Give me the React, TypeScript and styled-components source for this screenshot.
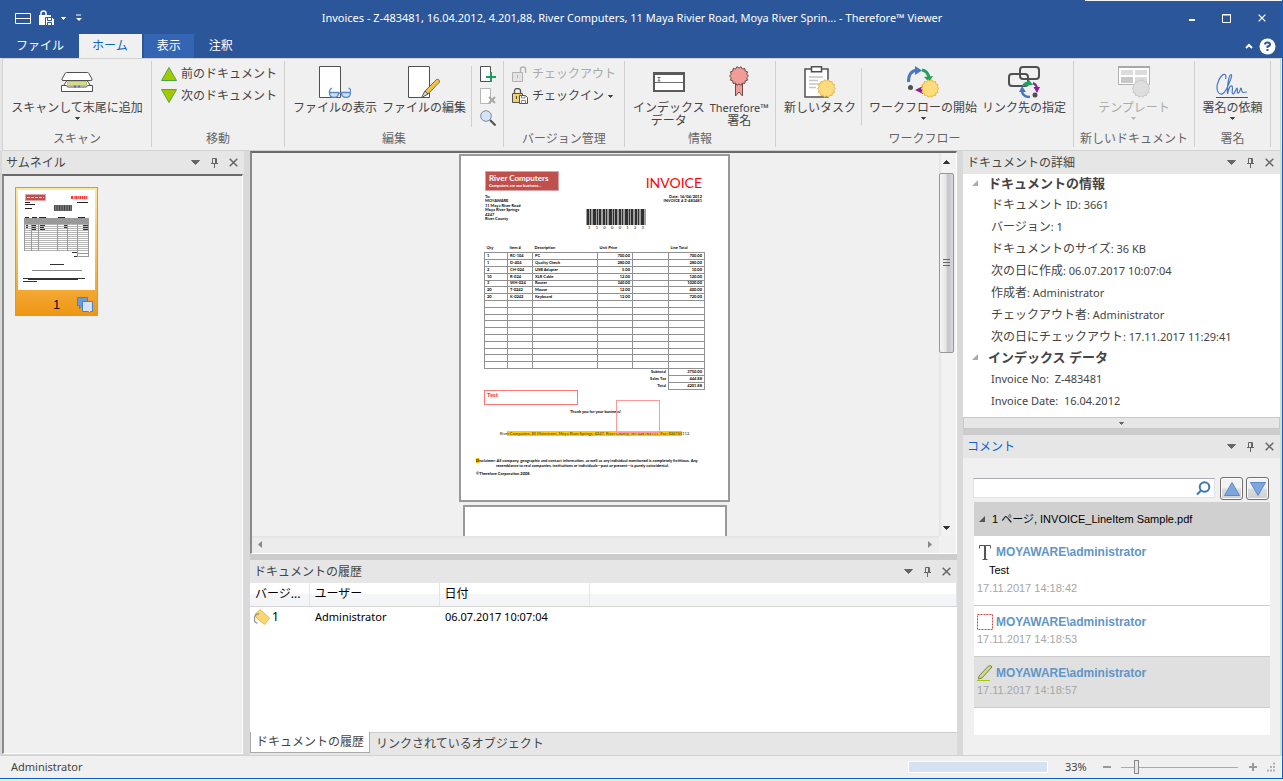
import React from "react";
import styled, { createGlobalStyle, css } from "styled-components";

const uiFont = '"Noto Sans", "Noto Sans CJK JP", sans-serif';
const plainFont = '"Liberation Sans", "Noto Sans CJK JP", sans-serif';
const blue = "#2b579a";

const GlobalStyle = createGlobalStyle`
  * { box-sizing: border-box; }
  body { margin: 0; overflow: hidden; background: #e9eef4; }
  button, input { font: inherit; color: inherit; margin: 0; }
  button { padding: 0; border: 0; background: none; }
  svg { display: block; flex: none; }
`;

/* ---------- window ---------- */

const Window = styled.div`
  display: flex;
  flex-direction: column;
  height: calc(100vh - 2px);
  border-right: 1px solid #0a60c8;
  border-bottom: 1px solid #0a60c8;
  background: #e6e6e6;
  font-family: ${uiFont};
  font-size: 12px;
  line-height: 16px;
  color: #444;
  white-space: nowrap;
`;

const TopEdge = styled.div`
  flex: none;
  height: 2px;
  border-bottom: 1px solid #0a60c8;
  background: linear-gradient(to left, #f4f4f4 197px, ${blue} 197px);
`;

const TitleBar = styled.header`
  flex: none;
  display: grid;
  grid-template-columns: 120px 1fr 138px;
  align-items: center;
  height: 32px;
  background: ${blue};
  color: #fff;
`;

const QuickTools = styled.div`
  display: flex;
  align-items: center;
  gap: 5px;
  padding-left: 15px;
`;

const Title = styled.h1`
  margin: 0;
  font-size: 11px;
  font-weight: 400;
  text-align: center;
`;

const WindowButtons = styled.div`
  display: flex;
  justify-content: flex-end;
  padding-right: 3px;
`;

const WindowButton = styled.button`
  display: grid;
  place-items: center;
  width: 35px;
  height: 24px;
`;

const TabBar = styled.nav`
  flex: none;
  display: flex;
  gap: 2px;
  height: 24px;
  padding: 0 6px 0 3px;
  background: ${blue};
  color: #fff;
`;

const RibbonTab = styled.button<{ $state?: "active" | "hover" }>`
  padding: 0 13px;
  line-height: 22px;
  ${(p) => p.$state === "active" && css`padding-right: 14px; background: #f0f0f0; color: #0a64c8;`}
  ${(p) => p.$state === "hover" && css`background: #3365b2;`}
`;

const TabTools = styled.div`
  display: flex;
  align-items: center;
  gap: 6px;
  margin-left: auto;
`;

/* ---------- ribbon ---------- */

const Ribbon = styled.div`
  flex: none;
  display: flex;
  height: 93px;
  margin: 0 1px 0 2px;
  border: 1px solid #d2d2d2;
  background: #f0f0f0;
`;

const Group = styled.section<{ $width: number }>`
  display: flex;
  flex-direction: column;
  width: ${(p) => p.$width}px;
  margin: 2px 0 3px;
  border-right: 1px solid #d0d0d0;
`;

const GroupBody = styled.div<{ $pad?: number }>`
  flex: 1;
  display: flex;
  justify-content: ${(p) => (p.$pad ? "flex-start" : "center")};
  gap: 5px;
  padding: 5px 0 0 ${(p) => p.$pad ?? 0}px;
`;

const GroupLabel = styled.div`
  line-height: 16px;
  text-align: center;
  color: #666;
`;

const BigButton = styled.button<{ $off?: boolean }>`
  display: flex;
  flex-direction: column;
  align-items: center;
  align-self: flex-start;
  gap: 3px;
  line-height: 13px;
  color: ${(p) => (p.$off ? "#aaa" : "#444")};
`;

const ButtonText = styled.span`
  display: flex;
  flex-direction: column;
  align-items: center;
`;

const Latin = styled.span`
  font-size: 11px;
`;

const SmallColumn = styled.div<{ $ruled?: boolean }>`
  display: flex;
  flex-direction: column;
  gap: 6px;
  ${(p) => p.$ruled && css`padding-left: 8px; border-left: 1px solid #d0d0d0; margin-bottom: 4px;`}
`;

const Rule = styled.div`
  width: 1px;
  height: 57px;
  margin: 2px 2px 0 0;
  background: #d0d0d0;
`;

const SmallButton = styled.button<{ $off?: boolean }>`
  display: flex;
  align-items: center;
  gap: 4px;
  height: 16px;
  color: ${(p) => (p.$off ? "#aaa" : "#444")};
`;

/* ---------- docking layout ---------- */

const Workspace = styled.main`
  flex: 1;
  min-height: 0;
  display: grid;
  grid-template-columns: 242px 1fr 317px;
  column-gap: 6px;
  padding: 0 2px 0 2px;
  background: #d9d9d9;
`;

const Column = styled.div`
  display: flex;
  flex-direction: column;
  min-width: 0;
  min-height: 0;
`;

const PanelHeader = styled.header`
  flex: none;
  display: flex;
  align-items: center;
  height: 23px;
  padding: 0 1px 0 4px;
  background: #e6e6e6;
`;

const PanelTitle = styled.h2<{ $active?: boolean }>`
  flex: 1;
  margin: 0;
  font-size: 12px;
  font-weight: 400;
  color: ${(p) => (p.$active ? "#0a64d8" : "#444")};
`;

const PanelButton = styled.button`
  display: grid;
  place-items: center;
  width: 19px;
  height: 19px;
`;

const Splitter = styled.div`
  flex: none;
  height: 6px;
  background: #ccc;
`;

/* ---------- thumbnails ---------- */

const ThumbList = styled.div`
  flex: 1;
  padding: 11px;
  margin: 0 1px 1px 0;
  border: solid;
  border-width: 2px 1px 1px 2px;
  border-color: #6a6a6a #fff #fff #8a8a8a;
  background: #f0f0f0;
`;

const Thumb = styled.button`
  display: grid;
  grid-template-columns: 1fr 18px;
  width: 83px;
  height: 129px;
  padding: 2px;
  border: 1px solid #e8961e;
  background: linear-gradient(#ffe9a0, #f3ab38 78%, #ee9614);
  color: #000;
  font-family: ${plainFont};
`;

const ThumbPage = styled.span`
  grid-column: 1 / 3;
  height: 100px;
  background: #fff;
`;

const ThumbNumber = styled.span`
  padding: 6px 0 0 18px;
  text-align: center;
`;

const ThumbNote = styled.span`
  padding-top: 6px;
`;

/* ---------- viewer ---------- */

const Viewer = styled.div`
  flex: 1;
  min-height: 0;
  display: grid;
  grid-template: minmax(0, 1fr) 17px / 1fr 17px;
  border: solid;
  border-width: 2px 1px 1px 2px;
  border-color: #6a6a6a #fff #fff #8a8a8a;
  background: #f0f0f0;
`;

const Canvas = styled.div`
  overflow: hidden;
  display: flex;
  flex-direction: column;
  align-items: center;
  gap: 3px;
  padding: 1px 2px 0 0;
`;

const Sheet = styled.article`
  position: relative;
  flex: none;
  width: 271px;
  height: 348px;
  padding: 15px 24px 0 15px;
  border: 2px solid #999;
  background: #fff;
  color: #000;
  font: 700 4px/4px Lato, sans-serif;
`;

const NextSheet = styled.div`
  flex: none;
  width: 264px;
  height: 348px;
  border: 2px solid #999;
  background: #fff;
`;

const SheetTop = styled.div`
  display: flex;
  justify-content: space-between;
  padding-left: 9px;
`;

const Brand = styled.div`
  width: 74px;
  height: 20px;
  padding: 2px 3px;
  border: 1px solid #d9a3a3;
  background: #c0504d;
  color: #fff;
  font-size: 4px;
  line-height: 5px;
`;

const BrandName = styled.div`
  font-size: 8px;
  line-height: 9px;
`;

const InvoiceWord = styled.div`
  padding: 5px 2px 0 0;
  font-size: 14px;
  font-weight: 400;
  line-height: 14px;
  color: #f00;
`;

const SheetMeta = styled.div`
  display: grid;
  grid-template-columns: 101px 60px 1fr;
  height: 54px;
  padding: 4px 2px 0 9px;
`;

const Address = styled.div`
  display: flex;
  flex-direction: column;
  justify-content: space-between;
  height: 26px;
`;

const Barcode = styled.div`
  padding-top: 14px;
  font-weight: 400;
`;

const BarcodeDigits = styled.div`
  display: flex;
  justify-content: space-between;
  padding: 1px 2px;
`;

const InvoiceRef = styled.div`
  text-align: right;
`;

const Items = styled.table`
  table-layout: fixed;
  width: 220px;
  margin-left: 8px;
  border-collapse: collapse;
  tr { height: 7px; }
  tbody tr:nth-child(5n) { height: 6px; }
  th, td { padding: 0 2px; text-align: left; font-weight: 700; }
  tbody td, td.sum { border: 1px solid #909090; }
  td.num, tfoot td { text-align: right; }
`;

const NoteBox = styled.div`
  width: 94px;
  height: 15px;
  margin-left: 8px;
  padding: 1px 2px;
  border: 1px solid #f77;
  color: #f33;
  font-size: 6px;
  line-height: 6px;
`;

const Thanks = styled.div`
  padding: 5px 0 0 94px;
`;

const Marked = styled.div`
  display: flex;
  justify-content: center;
  width: 175px;
  height: 5px;
  margin: 17px 0 0 31px;
  background: #ffc800;
  color: #7a5a1a;
  font-family: "Liberation Sans Narrow", Lato, sans-serif;
  line-height: 5px;
  white-space: nowrap;
`;

const Disclaimer = styled.p`
  margin: 23px 0 0;
  white-space: nowrap;
  mark { background: #ffc800; color: inherit; }
  span { display: block; padding: 1px 0 4px 20px; }
`;

const BoxNote = styled.div`
  position: absolute;
  left: 155px;
  top: 244px;
  width: 44px;
  height: 33px;
  border: 1px solid #f99;
`;

const ScrollTrack = styled.div<{ $flat?: boolean }>`
  display: flex;
  flex-direction: ${(p) => (p.$flat ? "row" : "column")};
  align-items: center;
  justify-content: space-between;
  padding: ${(p) => (p.$flat ? "0 7px 0 6px" : "7px 2px 6px 0")};
  background: ${(p) => (p.$flat ? "linear-gradient(#e2e2e2, #ececec 3px)" : "linear-gradient(to right, #e2e2e2, #f2f2f2 3px)")};
`;

const ScrollThumb = styled.div`
  display: grid;
  place-items: center;
  width: 15px;
  height: 180px;
  margin: 9px 0 auto;
  border: 1px solid #979797;
  border-radius: 2px;
  background: linear-gradient(to right, #f5f5f5, #e6e6e8 45%, #c4c4c8 60%, #d8d8dc);
`;

/* ---------- history ---------- */

const HistoryBody = styled.div`
  flex: none;
  height: 149px;
  background: #fff;
`;

const HistoryTable = styled.table`
  table-layout: fixed;
  width: 100%;
  border-collapse: collapse;
  color: #000;
  th {
    height: 23px;
    padding: 0 5px;
    border-right: 1px solid #e2e5e9;
    border-bottom: 1px solid #d5d5d5;
    background: linear-gradient(#fff 45%, #f4f6f8 50%, #f2f4f7);
    text-align: left;
    font-weight: 400;
  }
  td { height: 22px; padding: 0 6px; }
  td:first-child { padding: 0 4px; }
`;

const VersionCell = styled.span`
  display: flex;
  align-items: center;
  gap: 2px;
`;

const BottomTabs = styled.div`
  flex: none;
  display: flex;
  height: 23px;
  border-top: 1px solid #ccc;
  background: #e6e6e6;
`;

const BottomTab = styled.button<{ $active?: boolean }>`
  height: 21px;
  padding: 0 6px;
  margin: ${(p) => (p.$active ? "-1px 0 0" : "0")};
  ${(p) => p.$active && css`
    padding: 0 5px;
    border: 1px solid #aaa;
    border-top: 0;
    background: #fff;
  `}
`;

/* ---------- details ---------- */

const Details = styled.div`
  height: 243px;
  background: #fff;
`;

const DetailHeading = styled.h3`
  display: flex;
  align-items: center;
  gap: 10px;
  height: 20px;
  margin: 0;
  padding: 0 0 2px 9px;
  font-size: 13px;
`;

const DetailList = styled.ul`
  margin: 0;
  padding: 0 0 0 28px;
  list-style: none;
  line-height: 22px;
`;

const Expander = styled.button`
  flex: none;
  display: grid;
  place-items: center;
  height: 12px;
  border: 1px solid #c8c8c8;
  background: #e6e6e6;
`;

/* ---------- comments ---------- */

const Comments = styled.div`
  flex: 1;
  padding: 19px 10px 0 11px;
  background: #f0f0f0;
`;

const SearchRow = styled.div`
  display: flex;
  gap: 3px;
  height: 24px;
  margin: 0 1px 1px 0;
`;

const SearchBox = styled.label`
  flex: 1;
  display: flex;
  align-items: center;
  height: 20px;
  margin: 1px 2px 0 -1px;
  padding-right: 3px;
  border: 1px solid #dce2ee;
  border-top-color: #abadb3;
  background: #fff;
`;

const SearchInput = styled.input`
  flex: 1;
  min-width: 0;
  height: 16px;
  border: 0;
  outline: 0;
  background: none;
`;

const StepButton = styled.button`
  display: grid;
  place-items: center;
  width: 23px;
  height: 23px;
  border: 1px solid #707070;
  border-radius: 3px;
  background: linear-gradient(#f2f2f2 48%, #ddd 52%, #cfcfcf);
  box-shadow: inset 0 0 0 1px #fafafa;
`;

const CommentList = styled.div`
  height: 233px;
  background: #fff;
  font-family: ${plainFont};
  font-size: 11px;
`;

const FileRow = styled.div`
  display: flex;
  align-items: center;
  gap: 7px;
  height: 34px;
  padding-left: 5px;
  background: #d0d0d0;
  color: #000;
`;

const Comment = styled.article<{ $selected?: boolean }>`
  padding: 7px 3px 8px;
  border-bottom: 1px solid #ccc;
  background: ${(p) => (p.$selected ? "#e0e0e0" : "#fff")};
`;

const Author = styled.div`
  display: flex;
  align-items: center;
  gap: 3px;
  height: 18px;
  font-size: 12px;
  font-weight: 700;
  color: #5f96c8;
`;

const CommentText = styled.div`
  padding: 1px 0 2px 12px;
  color: #000;
`;

const CommentDate = styled.time`
  display: block;
  line-height: 17px;
  color: #a6a6a6;
`;

/* ---------- status bar ---------- */

const StatusBar = styled.footer`
  flex: none;
  display: flex;
  align-items: center;
  height: 23px;
  padding: 0 6px 0 11px;
  border-top: 1px solid #d2d2d2;
  background: #f0f0f0;
  font-size: 11px;
`;

const StatusUser = styled.span`
  flex: 1;
`;

const Progress = styled.div`
  width: 140px;
  height: 12px;
  margin-right: 17px;
  border: 1px solid #fff;
  background: #d6e1f2;
`;

const ZoomValue = styled.label`
  width: 37px;
`;

const ZoomButton = styled.button`
  display: grid;
  place-items: center;
  width: 10px;
  height: 12px;
`;

const ZoomRange = styled.input`
  appearance: none;
  width: 117px;
  height: 16px;
  margin: 0 10px 0 9px;
  background: linear-gradient(#aaa, #aaa) center / 100% 1px no-repeat;
  &::-webkit-slider-thumb {
    appearance: none;
    width: 5px;
    height: 14px;
    border: 1px solid #888;
    background: #e8e8e8;
  }
`;

/* ---------- icons ---------- */

const Arrow = ({ up, w = 5, h = 3, color = "#444", stroke }: { up?: boolean; w?: number; h?: number; color?: string; stroke?: string }) => (
  <svg width={w} height={h} viewBox={`0 0 ${w} ${h}`}>
    <path d={up ? `M.5 ${h - 0.5}H${w - 0.5}L${w / 2} .5z` : `M.5 .5H${w - 0.5}L${w / 2} ${h - 0.5}z`} fill={color} stroke={stroke ?? color} />
  </svg>
);

const Fold = ({ color = "#aaa" }) => (
  <svg width="6" height="6"><path d="M6 0v6H0z" fill={color} /></svg>
);

const star = (cx: number, cy: number, r: number) => {
  const pts: string[] = [];
  for (let i = 0; i < 28; i++) {
    const a = (i * Math.PI) / 14;
    const d = i % 2 ? r - 1.6 : r;
    pts.push(`${(cx + d * Math.cos(a)).toFixed(1)},${(cy + d * Math.sin(a)).toFixed(1)}`);
  }
  return pts.join(" ");
};

const ScanIcon = () => (
  <svg width="32" height="32" fill="#fff" stroke="#505050">
    <path d="M1.500 21 6 14.500h20l4.500 6.500" />
    <path d="M5.500 6.500h21q1 0 1.500 1l3 5.500q.5 1.500-1 1.500H2q-1.500 0-1-1.500L4 7.500q.5-1 1.500-1z" />
    <path d="M6.500 15.500h19v4h-19z" fill="#d2dc82" stroke="#bcc66a" />
    <path d="M.5 19.500h5l1 1.500h19l1-1.500h5v6H.5z" />
    <path d="M13 20.500h2" stroke="#a838a8" strokeWidth="2" /><path d="M17 20.500h2" stroke="#4a7ac0" strokeWidth="2" />
  </svg>
);

const ViewIcon = () => (
  <svg width="32" height="32" fill="none">
    <path d="M.5.500h21v31H.5z" fill="#fff" stroke="#505050" />
    <g stroke="#5a8acb" strokeWidth="1.300">
      <path d="M13 22q-3 1-2.500 5M29.500 22q3 1 2 5" />
      <path d="M10.500 26.500h9q0 5-4.500 5t-4.500-5zM22.500 26.500h9q0 5-4.500 5t-4.500-5zM19.500 27.500q1.500-1 3 0" fill="#cfe0f4" />
    </g>
  </svg>
);

const EditIcon = () => (
  <svg width="32" height="32" fill="none">
    <path d="M.5.500h21v31H.5z" fill="#fff" stroke="#505050" />
    <path d="M17 25 28.500 13.500q3-1 3 2.500L20 28z" fill="#f2c04c" stroke="#8a6a28" />
    <path d="M17 25l3 3-5.500 3q-1-.5 0-1.500z" fill="#d8d8d8" stroke="#505050" />
  </svg>
);

const PageBadge = ({ kind }: { kind: "add" | "del" }) => (
  <svg width="16" height="16" fill="none">
    <path d="M.5.500h10v15H.5z" fill="#fff" stroke={kind === "add" ? "#505050" : "#b5b5b5"} />
    {kind === "add"
      ? <path d="M11 6v10M6 11h10" stroke="#1d9e58" strokeWidth="2" />
      : <path d="m9 9 6 6M15 9l-6 6" stroke="#a8a8a8" strokeWidth="2" />}
  </svg>
);

const LensIcon = () => (
  <svg width="16" height="16" fill="none">
    <circle cx="6" cy="6" r="5.300" fill="#d4e4f4" stroke="#7888a0" />
    <path d="m10 10 5.500 5.500" stroke="#505050" strokeWidth="2" />
  </svg>
);

const UnlockIcon = () => (
  <svg width="16" height="16" fill="none" stroke="#b2b2b2">
    <path d="M.5 6.500h10v9H.5z" fill="#e4e4e4" /><path d="M8.500 6V3q0-2 2.500-2t2.500 2v4" strokeWidth="1.500" /><path d="M5.500 9v3" />
  </svg>
);

const CheckinIcon = () => (
  <svg width="16" height="16" fill="none" stroke="#505050">
    <path d="M2.500 5V3q0-2.500 3-2.500t3 2.500v2" strokeWidth="1.300" />
    <path d="M.5 5.500h10v9H.5z" fill="#f8d060" /><path d="M4.500 8v3" />
    <path d="M7.500 7.500h6l2 2v6h-8z" fill="#fff" /><path d="M9.500 7.500v2.500h3.500V7.500M9.500 15.500v-3h4v3" stroke="#888" />
  </svg>
);

const IndexIcon = () => (
  <svg width="32" height="32" fill="none">
    <path d="M1 7h30v18H1z" fill="#fff" stroke="#5a5a5a" strokeWidth="2" /><path d="M1 7.500h30" stroke="#5a5a5a" strokeWidth="3" />
    <path d="M2 16.500h28M4.500 11.500h3M6 11v4M4.500 15h3" stroke="#707070" />
  </svg>
);

const SealIcon = () => (
  <svg width="32" height="32">
    <path d="M12.500 17v13l3.500-4 3.500 4V17z" fill="#f09c98" stroke="#6a4a4a" />
    <polygon points={star(16, 10, 9.500)} fill="#f09c98" stroke="#6a4a4a" />
  </svg>
);

const TaskIcon = () => (
  <svg width="32" height="32" fill="none">
    <path d="M1 3h23v28H1z" fill="#fff" stroke="#505050" strokeWidth="1.500" />
    <path d="M7.500.800h10v5h-10z" fill="#fff" stroke="#505050" strokeWidth="1.500" />
    <path d="M5 11h14M5 14.500h9M5 18h14M5 21.500h7" stroke="#c4c4c4" strokeWidth="1.500" />
    <polygon points={star(22.500, 22.500, 9)} fill="#fcdc7c" stroke="#f2b43c" />
  </svg>
);

const FlowIcon = () => (
  <svg width="32" height="32" fill="none">
    <path d="M1.500 16Q1.500 5 10 4" stroke="#4a78be" strokeWidth="3" /><path d="M8 0v9l7-4.500z" fill="#4a78be" />
    <path d="M15 4q6 1 7 8" stroke="#20a05c" strokeWidth="3" /><path d="m17 11 9-1-4 6z" fill="#20a05c" />
    <path d="m8 24 8-4v8z" fill="#8a1ca0" /><circle cx="3.500" cy="21.500" r="2.500" fill="#505050" />
    <polygon points={star(23, 22.500, 9)} fill="#fcdc7c" stroke="#f2b43c" />
  </svg>
);

const LinkIcon = () => (
  <svg width="32" height="32" fill="none">
    <rect x="1" y="8" width="19" height="12" rx="3" stroke="#505050" strokeWidth="2" />
    <rect x="12" y="1" width="19" height="12" rx="3" stroke="#505050" strokeWidth="2" />
    <path d="m15 20 6-6 4 5z" fill="#20a05c" /><path d="M15 20q1-3 6-4" stroke="#20a05c" strokeWidth="2" />
    <path d="M25 17q4 2 4 6" stroke="#8a1ca0" strokeWidth="2" /><path d="M25.500 21H32l-3 6z" fill="#8a1ca0" />
    <path d="M14 24q0 7 8 7" stroke="#4a78be" strokeWidth="2.500" /><path d="m11 26 3-6 4 6z" fill="#4a78be" />
    <circle cx="27" cy="29" r="2.500" fill="#505050" />
  </svg>
);

const TemplateIcon = () => (
  <svg width="32" height="32" fill="none">
    <path d="M.5.500h31v18H.5z" fill="#fff" stroke="#b0b0b0" /><path d="M0 1h32" stroke="#a8a8a8" strokeWidth="2" />
    <path d="M3 4h12v5H3zM17 4h12v5H17zM17 11h12v6H17z" fill="#dcdcdc" /><path d="M3 11h12v6H3z" fill="#c8c8c8" />
    <polygon points={star(23, 22.500, 9)} fill="#dedede" stroke="#c8c8c8" />
  </svg>
);

const SignIcon = () => (
  <svg width="32" height="32" fill="none">
    <path d="M9.500 13c1.500-5-1.500-6-4.500-2.500S-.5 22 2 26s6 2 8.500-3S17 8.500 15 8.500s-4 11-3.500 19.500c1-6 3-9 4.500-8s-1 8 1 8 3-6 4-6-.5 6 1.500 5 1.500-5 2.500-5 0 4 2 4.500l4-.5" stroke="#4478c4" strokeWidth="1.200" />
    <path d="M0 31.500h32" stroke="#505050" />
  </svg>
);

const PinIcon = () => (
  <svg width="9" height="10" fill="none" stroke="#666"><path d="M2.500 5.500v-5h4v5M5.500 1v5M1 5.500h7M4.500 6v4" /></svg>
);

const CloseIcon = ({ color = "#666", size = 9 }) => (
  <svg width={size} height={size} viewBox="0 0 9 9"><path d="m.700.700 7.600 7.600M8.300.700.700 8.300" stroke={color} strokeWidth="1.500" /></svg>
);

const NotesIcon = () => (
  <svg width="16" height="16"><path d="M.5.500h10v8h-6l-2 3v-3h-2z" fill="#6c9cd8" stroke="#4a80c4" /><path d="M5.500 4.500h10v10h-2l-1 1-1-1h-6z" fill="#d4e2f6" stroke="#4a80c4" /></svg>
);

const TagIcon = () => (
  <svg width="16" height="16" fill="none"><path d="M6 .5 15.500 9l-5 6.500L2 8.500V4.500z" fill="#fcd674" stroke="#efb546" /><path d="M5 5Q1 4 .5 9t3 5" stroke="#909090" strokeWidth="1.300" /></svg>
);

const MiniPage = () => (
  <svg width="77" height="100" viewBox="0 0 77 100">
    <path d="M7.500 4.500h20v6h-20z" fill="#c0504d" stroke="#dba5a5" /><path d="M9 7.500h17" stroke="#f5dada" strokeDasharray="3 1" />
    <path d="M53 7.500h17" stroke="#f33" strokeWidth="3" strokeDasharray="2 .6 1 .6" />
    <path d="M7 12.500h5M7 14.500h10M7 18.500h7M59 12.500h11M7 27.500h4M14 27.500h5M21 27.500h7M40 27.500h7M60 27.500h7" stroke="#222" />
    <path d="M36 15h18v6H36z" fill="#777" /><path d="M36 18h18" stroke="#444" strokeWidth="6" strokeDasharray="1 1.500" />
    {Array.from({ length: 14 }, (_, i) => <path key={i} d={`M6 ${34.5 + i * 2}h65`} stroke="#b5b5b5" />)}
    <path d="M6 28h65v6H6z" fill="#999" />
    <path d="M6.500 28v33M13.500 28v33M20.500 28v33M39.500 28v33M49.500 28v33M59.500 28v39M70.500 28v39M59 63.500h12M59 66.500h12" stroke="#999" />
    <path d="M8 35.500h2M14 35.500h4M22 35.500h5M46 35.500h3M65 35.500h5M8 37.500h2M14 37.500h4M22 37.500h4M46 37.500h3M65 37.500h5M14 39.500h4M22 39.500h5M65 39.500h5M54 62.500h5M56 66.500h3" stroke="#333" />
    <path d="M32 74.500h14M5 88.500h62M10 89.500h50M5 91.500h14" stroke="#333" /><path d="M14 80.500h50" stroke="#888" />
  </svg>
);

/* ---------- data ---------- */

const lines = [
  ["1", "RC-104", "PC", "700.00", "700.00"],
  ["1", "D-404", "Quality Check", "280.00", "280.00"],
  ["2", "CH-024", "USB Adapter", "5.00", "10.00"],
  ["10", "R-024", "XLR Cable", "12.00", "120.00"],
  ["3", "WH-024", "Router", "340.00", "1020.00"],
  ["20", "T-0242", "Mouse", "12.00", "400.00"],
  ["20", "K-0242", "Keyboard", "12.00", "720.00"],
];

const details: [string, string][] = [
  ["ドキュメント ", "ID: 3661"],
  ["バージョン", ": 1"],
  ["ドキュメントのサイズ", ": 36 KB"],
  ["次の日に作成", ": 06.07.2017 10:07:04"],
  ["作成者", ": Administrator"],
  ["チェックアウト者", ": Administrator"],
  ["次の日にチェックアウト", ": 17.11.2017 11:29:41"],
];

const Header = ({ title, active }: { title: string; active?: boolean }) => (
  <PanelHeader>
    <PanelTitle $active={active}>{title}</PanelTitle>
    <PanelButton aria-label="メニュー"><Arrow w={9} h={5} color="#666" /></PanelButton>
    <PanelButton aria-label="固定"><PinIcon /></PanelButton>
    <PanelButton aria-label="閉じる"><CloseIcon /></PanelButton>
  </PanelHeader>
);

const Big = ({ icon, text, menu, off }: { icon: React.ReactNode; text: React.ReactNode; menu?: boolean; off?: boolean }) => (
  <BigButton $off={off} disabled={off}>
    {icon}
    <ButtonText>{text}</ButtonText>
    {menu && <Arrow color={off ? "#b8b8b8" : "#444"} />}
  </BigButton>
);

const InvoiceSheet = () => (
  <Sheet>
    <SheetTop>
      <Brand><BrandName>River Computers</BrandName>Computers are our business...</Brand>
      <InvoiceWord>INVOICE</InvoiceWord>
    </SheetTop>
    <SheetMeta>
      <Address>
        <div>To:</div><div>MOYAWARE</div><div>11 Maya River Road</div><div>Moya River Springs</div><div>4247</div><div>River County</div>
      </Address>
      <Barcode>
        <svg width="60" height="16">
          <path d="M0 0h60v16H0z" fill="#a0a0a0" />
          <path d="M1 8h58" stroke="#303030" strokeWidth="16" strokeDasharray="2 1 1 2 3 1 1 1 2 2" />
        </svg>
        <BarcodeDigits>{"11000123".split("").map((d, i) => <span key={i}>{d}</span>)}</BarcodeDigits>
      </Barcode>
      <InvoiceRef><div>Date: 16/04/2012</div><div>INVOICE # Z-483481</div></InvoiceRef>
    </SheetMeta>
    <Items>
      <colgroup>{[23, 25, 65, 35, 36, 36].map((w, i) => <col key={i} width={w} />)}</colgroup>
      <thead><tr><th>Qty</th><th>Item #</th><th>Description</th><th>Unit Price</th><th /><th>Line Total</th></tr></thead>
      <tbody>
        {Array.from({ length: 17 }, (_, i) => {
          const r = lines[i] ?? ["", "", "", "", ""];
          return <tr key={i}><td>{r[0]}</td><td>{r[1]}</td><td>{r[2]}</td><td className="num">{r[3]}</td><td /><td className="num">{r[4]}</td></tr>;
        })}
      </tbody>
      <tfoot>
        {[["Subtotal", "3750.00"], ["Sales Tax", "444.88"], ["Total", "4201.88"]].map(([k, v]) => (
          <tr key={k}><td colSpan={5}>{k}</td><td className="sum">{v}</td></tr>
        ))}
      </tfoot>
    </Items>
    <NoteBox>Test</NoteBox>
    <Thanks>Thank you for your business!</Thanks>
    <Marked>River Computers, 85 Mainstreet, Moya River Springs, 4247, River County, Tel: 026765111, Fax: 026765112</Marked>
    <Disclaimer>
      <mark>D</mark>isclaimer: All company, geographic and contact information, as well as any individual mentioned is completely fictitious. Any
      <span>resemblance to real companies, institutions or individuals—past or present—is purely coincidental.</span>
      ©Therefore Corporation 2008
    </Disclaimer>
    <BoxNote />
  </Sheet>
);

export default function App() {
  return (
    <Window>
      <GlobalStyle />
      <TopEdge />
      <TitleBar>
        <QuickTools>
          <svg width="16" height="11" fill="none" stroke="#fff"><path d="M.5.500h15v10H.5zM1 5.500h14" /></svg>
          <svg width="20" height="16" fill="none">
            <path d="M5 6V3.500Q5 1 7.500 1T10 3.500V6" stroke="#fff" strokeWidth="1.500" />
            <path d="M3 5h12v10H3z" fill="#fff" /><path d="M9.500 7.500h7l2 2v6h-9z" fill="#fff" stroke={blue} /><path d="M11.500 8v2.500h4V8M11.500 15v-2.500h4V15" stroke={blue} />
          </svg>
          <Arrow color="#fff" />
          <svg width="14" height="8"><path d="M5 1h5" stroke="#fff" /><path d="M5 4h6L8 7z" fill="#fff" /></svg>
        </QuickTools>
        <Title>Invoices - Z-483481, 16.04.2012, 4.201,88, River Computers, 11 Maya Rivier Road, Moya River Sprin... - Therefore™ Viewer</Title>
        <WindowButtons>
          <WindowButton aria-label="最小化"><svg width="6" height="6"><path d="M0 5h6" stroke="#fff" strokeWidth="2" /></svg></WindowButton>
          <WindowButton aria-label="最大化"><svg width="9" height="9" fill="none" stroke="#fff"><path d="M.5.500h8v8h-8zM0 1h9" /></svg></WindowButton>
          <WindowButton aria-label="閉じる"><CloseIcon color="#fff" size={8} /></WindowButton>
        </WindowButtons>
      </TitleBar>
      <TabBar>
        <RibbonTab>ファイル</RibbonTab>
        <RibbonTab $state="active">ホーム</RibbonTab>
        <RibbonTab $state="hover">表示</RibbonTab>
        <RibbonTab>注釈</RibbonTab>
        <TabTools>
          <svg width="8" height="6" fill="none"><path d="m1 5 3-3 3 3" stroke="#fff" strokeWidth="2" /></svg>
          <svg width="17" height="17" fill="none"><circle cx="8.500" cy="8.500" r="8" fill="#fff" /><path d="M6 6.500Q6 4.500 8.500 4.500T11 6.500Q11 8 8.500 8.500V10M8.500 11v2" stroke={blue} strokeWidth="2" /></svg>
        </TabTools>
      </TabBar>

      <Ribbon>
        <Group $width={149}>
          <GroupBody><Big icon={<ScanIcon />} text="スキャンして末尾に追加" menu /></GroupBody>
          <GroupLabel>スキャン</GroupLabel>
        </Group>
        <Group $width={133}>
          <GroupBody $pad={9}>
            <SmallColumn>
              <SmallButton><Arrow up w={16} h={14} color="#a6c800" stroke="#4aa848" />前のドキュメント</SmallButton>
              <SmallButton><Arrow w={16} h={14} color="#a6c800" stroke="#4aa848" />次のドキュメント</SmallButton>
            </SmallColumn>
          </GroupBody>
          <GroupLabel>移動</GroupLabel>
        </Group>
        <Group $width={219}>
          <GroupBody $pad={8}>
            <Big icon={<ViewIcon />} text="ファイルの表示" />
            <Big icon={<EditIcon />} text="ファイルの編集" />
            <SmallColumn $ruled>
              <SmallButton aria-label="追加"><PageBadge kind="add" /></SmallButton>
              <SmallButton aria-label="削除"><PageBadge kind="del" /></SmallButton>
              <SmallButton aria-label="検索"><LensIcon /></SmallButton>
            </SmallColumn>
          </GroupBody>
          <GroupLabel>編集</GroupLabel>
        </Group>
        <Group $width={121}>
          <GroupBody $pad={8}>
            <SmallColumn>
              <SmallButton $off disabled><UnlockIcon />チェックアウト</SmallButton>
              <SmallButton><CheckinIcon />チェックイン<Arrow /></SmallButton>
            </SmallColumn>
          </GroupBody>
          <GroupLabel>バージョン管理</GroupLabel>
        </Group>
        <Group $width={151}>
          <GroupBody $pad={8}>
            <Big icon={<IndexIcon />} text={<><span>インデックス</span><span>データ</span></>} />
            <Big icon={<SealIcon />} text={<><Latin>Therefore™</Latin><span>署名</span></>} />
          </GroupBody>
          <GroupLabel>情報</GroupLabel>
        </Group>
        <Group $width={298}>
          <GroupBody $pad={8}>
            <Big icon={<TaskIcon />} text="新しいタスク" />
            <Rule />
            <Big icon={<FlowIcon />} text="ワークフローの開始" menu />
            <Big icon={<LinkIcon />} text="リンク先の指定" />
          </GroupBody>
          <GroupLabel>ワークフロー</GroupLabel>
        </Group>
        <Group $width={121}>
          <GroupBody><Big icon={<TemplateIcon />} text="テンプレート" menu off /></GroupBody>
          <GroupLabel>新しいドキュメント</GroupLabel>
        </Group>
        <Group $width={76}>
          <GroupBody><Big icon={<SignIcon />} text="署名の依頼" menu /></GroupBody>
          <GroupLabel>署名</GroupLabel>
        </Group>
      </Ribbon>

      <Workspace>
        <Column>
          <Header title="サムネイル" />
          <ThumbList>
            <Thumb>
              <ThumbPage><MiniPage /></ThumbPage>
              <ThumbNumber>1</ThumbNumber>
              <ThumbNote><NotesIcon /></ThumbNote>
            </Thumb>
          </ThumbList>
        </Column>

        <Column>
          <Viewer>
            <Canvas><InvoiceSheet /><NextSheet /></Canvas>
            <ScrollTrack>
              <Arrow up w={7} h={4} color="#333" />
              <ScrollThumb><svg width="7" height="8"><path d="M0 .5h7M0 3.500h7M0 6.500h7" stroke="#666" /></svg></ScrollThumb>
              <Arrow w={7} h={4} color="#333" />
            </ScrollTrack>
            <ScrollTrack $flat>
              <svg width="5" height="7"><path d="M4 0v7L0 3.500z" fill="#888" /></svg>
              <svg width="5" height="7"><path d="M1 0v7l4-3.500z" fill="#888" /></svg>
            </ScrollTrack>
          </Viewer>
          <Splitter />
          <Header title="ドキュメントの履歴" />
          <HistoryBody>
            <HistoryTable>
              <colgroup><col width="59" /><col width="130" /><col width="150" /><col /></colgroup>
              <thead><tr><th>バージ...</th><th>ユーザー</th><th>日付</th><th /></tr></thead>
              <tbody><tr><td><VersionCell><TagIcon />1</VersionCell></td><td><Latin>Administrator</Latin></td><td><Latin>06.07.2017 10:07:04</Latin></td><td /></tr></tbody>
            </HistoryTable>
          </HistoryBody>
          <BottomTabs>
            <BottomTab $active>ドキュメントの履歴</BottomTab>
            <BottomTab>リンクされているオブジェクト</BottomTab>
          </BottomTabs>
        </Column>

        <Column>
          <Header title="ドキュメントの詳細" />
          <Details>
            <DetailHeading><Fold />ドキュメントの情報</DetailHeading>
            <DetailList>{details.map(([k, v]) => <li key={k}>{k}<Latin>{v}</Latin></li>)}</DetailList>
            <DetailHeading><Fold />インデックス データ</DetailHeading>
            <DetailList>
              <li><Latin>Invoice No:&nbsp; Z-483481</Latin></li>
              <li><Latin>Invoice Date:&nbsp; 16.04.2012</Latin></li>
            </DetailList>
          </Details>
          <Expander aria-label="展開"><Arrow color="#666" /></Expander>
          <Splitter />
          <Header title="コメント" active />
          <Comments>
            <SearchRow>
              <SearchBox>
                <SearchInput aria-label="コメントの検索" />
                <svg width="15" height="15" fill="none" stroke="#3a78b8" strokeWidth="2"><circle cx="8.500" cy="6" r="4.800" /><path d="m5 9.500-4 4" /></svg>
              </SearchBox>
              <StepButton aria-label="前へ"><Arrow up w={16} h={14} color="#7ea6dc" stroke="#5a8acb" /></StepButton>
              <StepButton aria-label="次へ"><Arrow w={16} h={14} color="#7ea6dc" stroke="#5a8acb" /></StepButton>
            </SearchRow>
            <CommentList>
              <FileRow><Fold color="#555" /><span>1 ページ, INVOICE_LineItem Sample.pdf</span></FileRow>
              <Comment>
                <Author>
                  <svg width="16" height="16" fill="none" stroke="#555"><path d="M2.500 4.500v-3h11v3M5.500 15.500h5" /><path d="M8 1v14" strokeWidth="2" /></svg>
                  MOYAWARE\administrator
                </Author>
                <CommentText>Test</CommentText>
                <CommentDate>17.11.2017 14:18:42</CommentDate>
              </Comment>
              <Comment>
                <Author>
                  <svg width="16" height="16"><path d="M.5.500h15v15H.5z" fill="#fff" stroke="#cc4444" strokeDasharray="2 1" /></svg>
                  MOYAWARE\administrator
                </Author>
                <CommentDate>17.11.2017 14:18:53</CommentDate>
              </Comment>
              <Comment $selected>
                <Author>
                  <svg width="16" height="16" fill="none"><path d="M2 11 11.500 1q3-1 3.500 1L5 13l-3.500 1z" fill="#cfdc80" stroke="#7a8050" /><path d="M0 15.500h13" stroke="#a6c800" /></svg>
                  MOYAWARE\administrator
                </Author>
                <CommentDate>17.11.2017 14:18:57</CommentDate>
              </Comment>
            </CommentList>
          </Comments>
        </Column>
      </Workspace>

      <StatusBar>
        <StatusUser>Administrator</StatusUser>
        <Progress />
        <ZoomValue htmlFor="zoom">33%</ZoomValue>
        <ZoomButton aria-label="縮小"><svg width="8" height="2"><path d="M0 1h8" stroke="#999" strokeWidth="2" /></svg></ZoomButton>
        <ZoomRange id="zoom" type="range" min={0} max={100} defaultValue={12} />
        <ZoomButton aria-label="拡大"><svg width="8" height="8"><path d="M0 4h8M4 0v8" stroke="#999" strokeWidth="2" /></svg></ZoomButton>
        <svg width="18" height="10"><path d="M15 1.500h2M12 5h2M15 5h2M9 8.500h2M12 8.500h2M15 8.500h2" stroke="#b0b0b0" strokeWidth="2" /></svg>
      </StatusBar>
    </Window>
  );
}
